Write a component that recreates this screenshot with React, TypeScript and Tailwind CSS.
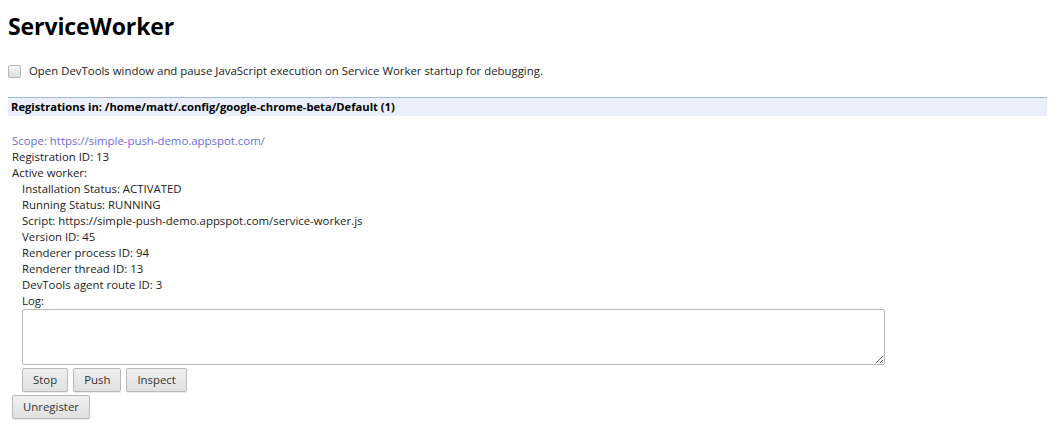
const DETAILS = [
  'Installation Status: ACTIVATED',
  'Running Status: RUNNING',
  'Script: https://simple-push-demo.appspot.com/service-worker.js',
  'Version ID: 45',
  'Renderer process ID: 94',
  'Renderer thread ID: 13',
  'DevTools agent route ID: 3',
]

function Btn({ label }: { label: string }) {
  return (
    <button className="h-[24px] px-[10px] text-[11.4px] leading-none text-[#333] rounded-[2px] border border-[#b8b8b8] bg-gradient-to-b from-[#f0f0f0] to-[#e0e0e0] shadow-[0_1px_0_rgba(0,0,0,0.08)]">
      {label}
    </button>
  )
}

export default function App() {
  return (
    <div className="min-h-[426px] bg-white text-black px-[8px] pt-[10px] font-['Open_Sans',sans-serif] text-[11.4px]">
      <h1 className="text-[23px] font-bold leading-[32px] tracking-[-0.1px]">ServiceWorker</h1>

      <label className="flex items-center mt-[21px] h-[16px]">
        <span className="w-[13px] h-[13px] rounded-[2px] border border-[#b5b5b5] bg-gradient-to-b from-[#f6f6f6] to-[#dedede]" />
        <span className="ml-[8px] text-[#222]">
          Open DevTools window and pause JavaScript execution on Service Worker startup for debugging.
        </span>
      </label>

      <div className="mt-[18px] h-[19px] border-t border-[#9eb9e6] bg-[#ebeff9] px-[3px] flex items-center font-bold text-[11.2px]">
        Registrations in: /home/matt/.config/google-chrome-beta/Default (1)
      </div>

      <div className="mt-[17px] pl-[4px] leading-[16px] text-[#222]">
        <div className="text-[#6b6be0]">Scope: https://simple-push-demo.appspot.com/</div>
        <div>Registration ID: 13</div>
        <div>Active worker:</div>
        <div className="pl-[10px]">
          {DETAILS.map((d) => (
            <div key={d}>{d}</div>
          ))}
          <div>Log:</div>
          <textarea className="block w-[863px] h-[56px] border border-[#bbbbbb] rounded-[2px] resize-y" />
          <div className="flex gap-[5px] mt-[3px]">
            <Btn label="Stop" />
            <Btn label="Push" />
            <Btn label="Inspect" />
          </div>
        </div>
        <div className="mt-[3px]">
          <Btn label="Unregister" />
        </div>
      </div>
    </div>
  )
}
